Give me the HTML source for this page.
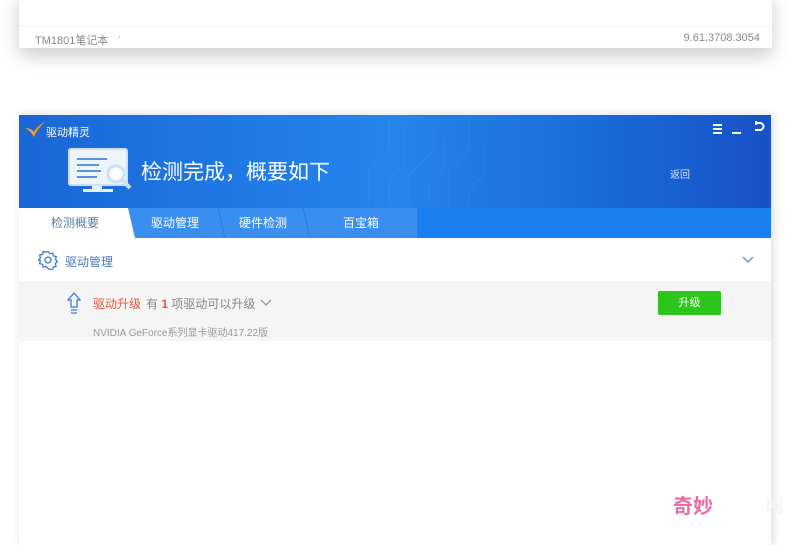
<!DOCTYPE html>
<html><head><meta charset="utf-8">
<style>
*{margin:0;padding:0;box-sizing:border-box}
body{width:790px;height:532px;overflow:hidden;background:#fff;font-family:"Liberation Sans","Noto Sans CJK SC",sans-serif;position:relative}
.card{position:absolute;left:19px;top:-10px;width:753px;height:58px;background:#fff;box-shadow:0 8px 18px rgba(0,0,0,.2)}
.card .l{position:absolute;left:16px;top:42px;font-size:11px;color:#888}
.card .r{position:absolute;right:12px;top:42px;font-size:11px;color:#888}
.card .ln{position:absolute;left:0;right:0;top:36px;border-top:1px solid #f2f2f2}
.win{position:absolute;left:19px;top:115px;width:752px;height:430px;background:#fff;box-shadow:2px 0 8px rgba(0,0,0,.15)}
.hdr{position:absolute;left:0;top:0;width:752px;height:93px;background:linear-gradient(90deg,#1b66d6 0%,#1f7ae6 30%,#2485ec 50%,#1a6ddc 75%,#1752c6 100%)}
.tabs{position:absolute;left:0;top:93px;width:752px;height:30px;background:#1a7ff0}
.tabs .bg{position:absolute;left:100px;top:0;width:298px;height:30px;background:#3a8ef0}
.tab{position:absolute;top:0;height:30px;line-height:30px;font-size:12px;color:#fff;text-align:center}
.sep{position:absolute;top:0;width:1px;height:30px;background:rgba(20,90,200,.35)}
.bar{position:absolute;width:9px;height:2px;background:#fff}
</style></head><body>
<div class="card"><div class="ln"></div><div class="l">TM1801笔记本 &nbsp;&nbsp;ˈ</div><div class="r">9.61.3708.3054</div></div>
<div class="win">
 <div class="hdr">
  <svg style="position:absolute;left:340px;top:5px;opacity:.07" width="140" height="85" stroke="#bfe4ff" fill="none" stroke-width="1">
   <path d="M10 85V50l20-20V0M30 85V60l15-15V10M50 85V55l25-25V5M70 85V65l15-15V20M90 85V50l20-20V0M110 85V70l15-15V25"/>
  </svg>
  <svg style="position:absolute;left:5px;top:6px" width="22" height="18"><path d="M1 7 Q6 9 10 16 Q13 8 21 1 Q13 5 10 11 Q7 7 1 7Z" fill="#f39c1e"/></svg>
  <div style="position:absolute;left:27px;top:9px;font-size:11px;color:#fff">驱动精灵</div>
  <div class="bar" style="left:694px;top:9px"></div><div class="bar" style="left:694px;top:13px"></div><div class="bar" style="left:694px;top:17px"></div>
  <div class="bar" style="left:713px;top:17px"></div>
  <svg style="position:absolute;right:6px;top:6px" width="12" height="12" stroke="#fff" stroke-width="2" fill="none"><path d="M3 2h4a3.5 3.5 0 0 1 0 7H2"/><path d="M3 0v4"/></svg>
  <svg style="position:absolute;left:48px;top:32px" width="66" height="48">
   <rect x="2" y="2" width="58" height="36" rx="2" fill="#eef4fc" stroke="#cfe0f6" stroke-width="2"/>
   <rect x="25" y="39" width="10" height="3" fill="#e8f0fb"/><rect x="16" y="42" width="30" height="3" fill="#e8f0fb"/>
   <path d="M10 12h30M10 18h22M10 24h24M10 30h20" stroke="#5b8fd6" stroke-width="2"/>
   <circle cx="49" cy="27" r="8" fill="#fff" stroke="#cfe0f6" stroke-width="3"/>
   <path d="M55 33l8 8" stroke="#cfe0f6" stroke-width="4"/>
  </svg>
  <div style="position:absolute;left:122px;top:41px;font-size:21px;color:#fff">检测完成，概要如下</div>
  <div style="position:absolute;left:651px;top:51px;font-size:10px;color:#d6e6fb">返回</div>
 </div>
 <div class="tabs">
  <div class="bg"></div>
  <svg style="position:absolute;left:0;top:0" width="120" height="30"><path d="M0 0H109L116 30H0Z" fill="#fff"/></svg>
  <div class="tab" style="left:0;width:112px;color:#5a7fa8">检测概要</div>
  <div class="tab" style="left:116px;width:80px">驱动管理</div>
  <div class="sep" style="left:202px;transform:skewX(12deg)"></div>
  <div class="tab" style="left:204px;width:80px">硬件检测</div>
  <div class="sep" style="left:287px;transform:skewX(12deg)"></div>
  <div class="tab" style="left:302px;width:80px">百宝箱</div>
 </div>
 <svg style="position:absolute;left:19px;top:135px" width="20" height="20" fill="none" stroke="#3b7ad8" stroke-width="1.3"><path d="M10 1.5l2 2.2 2.8-.7.6 2.9 2.9.8-.8 2.8 2 2.1-2.2 2 .8 2.8-2.9.7-.7 2.9-2.8-.8L10 18.5l-2-2.1-2.8.8-.7-2.9-2.9-.7.8-2.8L.5 10l2-2.1-.8-2.8 2.9-.8.6-2.9 2.8.7z"/><circle cx="10" cy="10" r="3"/></svg>
 <div style="position:absolute;left:46px;top:138px;font-size:12px;color:#4a78b8">驱动管理</div>
 <svg style="position:absolute;left:723px;top:141px" width="12" height="8" fill="none" stroke="#6a98dc" stroke-width="1.5"><path d="M1 1l5 5 5-5"/></svg>
 <div style="position:absolute;left:0;top:166px;width:752px;height:60px;background:#f5f5f5"></div>
 <svg style="position:absolute;left:48px;top:177px" width="14" height="22" fill="none" stroke="#3b7ad8" stroke-width="1.3"><path d="M7 1L1 8h3v7h6V8h3z"/><path d="M4 18h6M4 21h6"/></svg>
 <div style="position:absolute;left:74px;top:180px;font-size:12px;color:#e8563a">驱动升级</div>
 <div style="position:absolute;left:127px;top:180px;font-size:12px;color:#888">有 <b style="color:#e8563a">1</b> 项驱动可以升级</div>
 <svg style="position:absolute;left:241px;top:184px" width="12" height="8" fill="none" stroke="#999" stroke-width="1.3"><path d="M1 1l5 5 5-5"/></svg>
 <div style="position:absolute;left:74px;top:209px;font-size:10px;color:#999">NVIDIA GeForce系列显卡驱动417.22版</div>
 <div style="position:absolute;left:639px;top:176px;width:63px;height:24px;background:#2dc51c;border-radius:2px;color:#fff;font-size:11px;text-align:center;line-height:24px">升级</div>
</div>
<div style="position:absolute;left:673px;top:490px;font-size:20px;color:#ee6aa5;font-weight:bold">奇妙</div>
<div style="position:absolute;left:766px;top:492px;font-size:17px;color:#f2f2f2">网</div>
</body></html>
